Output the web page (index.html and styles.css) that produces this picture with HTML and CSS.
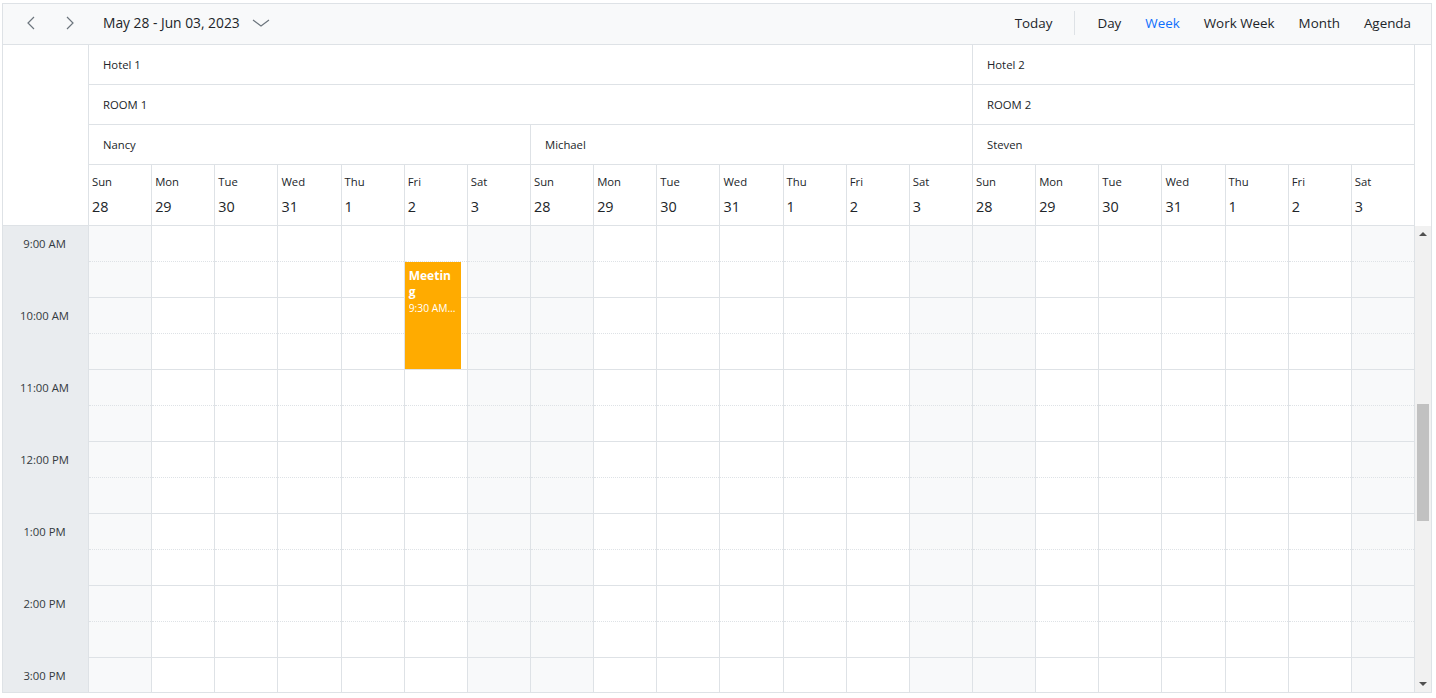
FILE: index.html
```html
<!DOCTYPE html>
<html lang="en">

<head>
  <meta charset="UTF-8">
  <meta name="viewport" content="width=device-width, initial-scale=1.0">
  <title>Scheduler</title>
  <link rel="stylesheet" href="styles.css">
</head>

<body>
  <div class="schedule">

    <div class="toolbar">
      <div class="toolbar-left">
        <button class="nav-btn">
          <svg width="16" height="16" viewBox="0 0 16 16"><polyline points="11,2 5,8 11,14" /></svg>
        </button>
        <button class="nav-btn">
          <svg width="16" height="16" viewBox="0 0 16 16"><polyline points="5,2 11,8 5,14" /></svg>
        </button>
        <button class="date-range">
          May 28 - Jun 03, 2023
          <svg width="18" height="10" viewBox="0 0 18 10"><polyline points="1,2 9,8 17,2" /></svg>
        </button>
      </div>
      <div class="toolbar-right">
        <button class="view">Today</button>
        <span class="separator"></span>
        <button class="view">Day</button>
        <button class="view active">Week</button>
        <button class="view">Work Week</button>
        <button class="view">Month</button>
        <button class="view">Agenda</button>
      </div>
    </div>

    <div class="header">
      <div class="corner"></div>
      <div class="header-grid">
        <div class="res-cell span-14">Hotel 1</div>
        <div class="res-cell span-7">Hotel 2</div>
        <div class="res-cell span-14">ROOM 1</div>
        <div class="res-cell span-7">ROOM 2</div>
        <div class="res-cell span-7">Nancy</div>
        <div class="res-cell span-7">Michael</div>
        <div class="res-cell span-7">Steven</div>
      </div>
      <div class="gutter"></div>
    </div>

    <div class="content">
      <div class="times"></div>
      <div class="cells"></div>
      <div class="scrollbar">
        <span class="arrow up"></span>
        <div class="track">
          <div class="thumb"></div>
        </div>
        <span class="arrow down"></span>
      </div>
    </div>

  </div>

  <script>
    const headerGrid = document.querySelector(".header-grid")
    const times = document.querySelector(".times")
    const cells = document.querySelector(".cells")

    const days = [["Sun", 28], ["Mon", 29], ["Tue", 30], ["Wed", 31], ["Thu", 1], ["Fri", 2], ["Sat", 3]]
    const hours = ["9:00 AM", "10:00 AM", "11:00 AM", "12:00 PM", "1:00 PM", "2:00 PM", "3:00 PM"]

    // three resources, one week each
    for (let r = 0; r < 3; r++) {
      days.forEach(([name, date], i) => {
        const head = document.createElement("div")
        head.className = "date-cell"
        head.innerHTML = `<span class="day-name">${name}</span><span class="day-date">${date}</span>`
        headerGrid.appendChild(head)

        const col = document.createElement("div")
        col.className = "day-col"
        if (i === 0 || i === 6) col.classList.add("weekend")
        hours.forEach(() => {
          col.innerHTML += `<div class="slot half"></div><div class="slot"></div>`
        })
        if (r === 0 && name === "Fri") {
          col.innerHTML += `<div class="event"><div class="event-title">Meeting</div><div class="event-time">9:30 AM - 11:00 AM</div></div>`
        }
        cells.appendChild(col)
      })
    }

    hours.forEach((h) => {
      times.innerHTML += `<div class="time-slot"><span>${h}</span></div><div class="time-slot"></div>`
    })
  </script>
</body>

</html>
```

FILE: styles.css
```css
* {
  box-sizing: border-box;
}

body {
  margin: 0;
  font-family: "Open Sans", sans-serif;
  color: #212529;
  background: #fff;
}

button {
  font-family: "Open Sans", sans-serif;
  background: none;
  border: none;
  cursor: pointer;
  color: #212529;
  padding: 0;
}

.schedule {
  margin: 3px 4px 0 2px;
  height: 690px;
  border: 1px solid #dee2e6;
  display: flex;
  flex-direction: column;
  overflow: hidden;
}

/* toolbar */
.toolbar {
  height: 41px;
  flex-shrink: 0;
  background: #f8f9fa;
  border-bottom: 1px solid #dee2e6;
  display: flex;
  align-items: center;
  justify-content: space-between;
  padding: 0 8px 3px 16px;
}

.toolbar-left {
  display: flex;
  align-items: center;
}

.nav-btn {
  width: 24px;
  height: 28px;
  margin-right: 15px;
  display: flex;
  align-items: center;
  justify-content: center;
}

.nav-btn svg,
.date-range svg {
  fill: none;
  stroke: #6c757d;
  stroke-width: 1.2;
}

.date-range {
  display: flex;
  align-items: center;
  gap: 12px;
  font-size: 13.8px;
  margin-left: 6px;
}

.toolbar-right {
  display: flex;
  align-items: center;
}

.view {
  font-size: 13.4px;
  padding: 6px 12px;
}

.view.active {
  color: #0d6efd;
}

.separator {
  width: 1px;
  height: 24px;
  background: #dee2e6;
  margin: 0 10px;
}

/* resource header */
.header {
  display: flex;
  flex-shrink: 0;
}

.corner {
  width: 86px;
  border-right: 1px solid #dee2e6;
  border-bottom: 1px solid #dee2e6;
}

.header-grid {
  flex: 1;
  display: grid;
  grid-template-columns: repeat(21, 1fr);
}

.gutter {
  width: 16px;
}

.res-cell {
  height: 40px;
  border-right: 1px solid #dee2e6;
  border-bottom: 1px solid #dee2e6;
  padding-left: 14px;
  display: flex;
  align-items: center;
  font-size: 11.3px;
}

.span-14 {
  grid-column: span 14;
}

.span-7 {
  grid-column: span 7;
}

.date-cell {
  height: 61px;
  border-right: 1px solid #dee2e6;
  border-bottom: 1px solid #dee2e6;
  padding: 8px 3px 0;
  display: flex;
  flex-direction: column;
}

.day-name {
  font-size: 11.3px;
  line-height: 18px;
}

.day-date {
  font-size: 14.4px;
  line-height: 22px;
  margin-top: 5px;
}

/* time grid */
.content {
  flex: 1;
  display: flex;
  overflow: hidden;
}

.times {
  width: 86px;
  background: #e9ecef;
  border-right: 1px solid #dee2e6;
}

.time-slot {
  height: 36px;
  display: flex;
  align-items: center;
  justify-content: center;
  padding: 0 2px 1px 0;
  font-size: 11.3px;
  color: #343a40;
}

.cells {
  flex: 1;
  display: grid;
  grid-template-columns: repeat(21, 1fr);
  align-items: start;
}

.day-col {
  position: relative;
  border-right: 1px solid #dee2e6;
  background: #fff;
}

.day-col.weekend {
  background: #f8f9fa;
}

.slot {
  height: 36px;
  border-bottom: 1px solid #dee2e6;
}

.slot.half {
  border-bottom: 1px dotted #dee2e6;
}

.event {
  position: absolute;
  top: 36px;
  left: 0;
  width: calc(100% - 6px);
  height: 107px;
  background: #ffab00;
  color: #fff;
  padding: 6px 4px 0;
  overflow: hidden;
}

.event-title {
  font-size: 12px;
  font-weight: 700;
  line-height: 16px;
  word-break: break-all;
}

.event-time {
  font-size: 10.3px;
  line-height: 16px;
  white-space: nowrap;
  overflow: hidden;
  text-overflow: ellipsis;
}

/* scrollbar */
.scrollbar {
  width: 16px;
  background: #f1f1f1;
  display: flex;
  flex-direction: column;
  align-items: center;
}

.arrow {
  width: 0;
  height: 0;
  border-left: 4px solid transparent;
  border-right: 4px solid transparent;
  margin: 6px 0;
}

.arrow.up {
  border-bottom: 4px solid #505050;
}

.arrow.down {
  border-top: 4px solid #505050;
}

.track {
  flex: 1;
  width: 100%;
  padding: 162px 2px 0;
}

.thumb {
  height: 117px;
  background: #c1c1c1;
}
```
